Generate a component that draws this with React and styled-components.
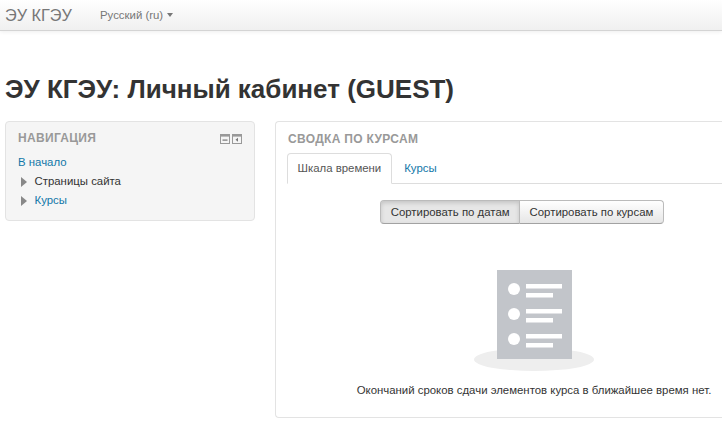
import React from "react";
import styled, { createGlobalStyle } from "styled-components";

const Global = createGlobalStyle`
  html, body { margin: 0; padding: 0; background: #fff; overflow: hidden; }
  body { font-family: "Liberation Sans", Arial, sans-serif; font-size: 11.4px; color: #333; width: 722px; height: 429px; }
`;
const Navbar = styled.header`
  height: 30px; display: flex; align-items: center; padding-left: 5px;
  background: linear-gradient(#ffffff, #f0f0f0); border-bottom: 1px solid #d4d4d4;
  box-shadow: 0 1px 4px rgba(0,0,0,.07);
`;
const Brand = styled.span`font-size: 16.3px; color: #777; width: 95px;`;
const Lang = styled.span`font-size: 11.4px; color: #777; display: flex; align-items: center; gap: 4px;`;
const Caret = styled.i`
  width: 0; height: 0; border-left: 3.5px solid transparent; border-right: 3.5px solid transparent;
  border-top: 4px solid #777;
`;
const Title = styled.h1`
  margin: 43px 0 0 5px; font-size: 26px; line-height: 30px; font-weight: 700; color: #333; height: 47px;
`;
const Columns = styled.div`display: flex; gap: 20px; padding-left: 5px; align-items: flex-start;`;
const Sidebar = styled.aside`
  flex: none; width: 250px; height: 100px; box-sizing: border-box; background: #f5f5f5;
  border: 1px solid #e3e3e3; border-radius: 4px; padding: 9px 12px 0; position: relative;
`;
const BlockTitle = styled.h2`
  margin: 0; font-size: 12px; line-height: 15px; font-weight: 700; color: #999; text-transform: uppercase; letter-spacing: .32px;
`;
const BlockActions = styled.div`position: absolute; top: 12px; right: 12px; display: flex; gap: 2px;`;
const NavList = styled.nav`margin-top: 7px; display: flex; flex-direction: column;`;
const NavRow = styled.div`
  height: 19px; line-height: 19px; display: flex; align-items: center;
  color: ${p => p.$link ? "#1177a8" : "#333"}; padding-left: ${p => p.$indent ? 3 : 0}px;
`;
const Arrow = styled.i`
  width: 0; height: 0; border-top: 5px solid transparent; border-bottom: 5px solid transparent;
  border-left: 6px solid #888; margin-right: 7.5px;
`;
const Main = styled.main`
  width: 447px; flex: none; height: 297px; box-sizing: border-box; background: #fff;
  border: 1px solid #e3e3e3; border-right: 0; border-radius: 4px 0 0 4px; padding: 10px 0 0 12px;
`;
const Tabs = styled.div`display: flex; margin: 6px 0 0 -1px; border-bottom: 1px solid #ddd; height: 30px;`;
const Tab = styled.div`
  box-sizing: border-box; height: ${p => p.$active ? 31 : 30}px; line-height: 29px; padding: 0 ${p => p.$active ? 9.5 : 11.5}px;
  color: ${p => p.$active ? "#555" : "#1177a8"};
  border: 1px solid ${p => p.$active ? "#ddd" : "transparent"}; border-bottom-color: ${p => p.$active ? "#fff" : "transparent"};
  border-radius: 4px 4px 0 0; background: ${p => p.$active ? "#fff" : "transparent"};
`;
const SortRow = styled.div`display: flex; justify-content: center; margin: 16px 0 0 34px;`;
const SortButton = styled.button`
  height: 24px; box-sizing: border-box; padding: 0 9.5px; font: 11.4px "Liberation Sans", Arial, sans-serif; color: #333;
  border: 1px solid #bbb; border-bottom-color: #a2a2a2;
  background: ${p => p.$active ? "#e6e6e6" : "linear-gradient(#fff, #e6e6e6)"};
  box-shadow: ${p => p.$active ? "inset 0 2px 4px rgba(0,0,0,.15)" : "inset 0 1px 0 rgba(255,255,255,.2)"};
  border-radius: ${p => p.$active ? "4px 0 0 4px" : "0 4px 4px 0"};
  margin-left: ${p => p.$active ? 0 : -1}px;
`;
const Empty = styled.div`display: flex; flex-direction: column; align-items: center; margin: 46px 0 0 58px;`;
const EmptyText = styled.p`margin: 11px 0 0; color: #333; line-height: 17px;`;

const BoxIcon = ({ minus }) => (
  <svg width="10" height="10" viewBox="0 0 10 10">
    <rect x=".5" y=".5" width="9" height="9" fill="#f5f5f5" stroke="#999" />
    <rect x="1" y="1" width="8" height="1.6" fill="#999" />
    {minus ? <rect x="2.5" y="5.5" width="5" height="1.2" fill="#777" /> : <path d="M6 3.8v4L3.5 5.8z" fill="#777" />}
  </svg>
);
const Illustration = () => (
  <svg width="120" height="101" viewBox="0 0 120 101">
    <ellipse cx="60" cy="89.5" rx="60" ry="11.5" fill="#eeeeee" />
    <rect x="23" y="0" width="75" height="89" fill="#c2c5ca" />
    {[0, 25, 50].map(d => (
      <g key={d} fill="#fff">
        <circle cx="40" cy={19 + d} r="6" />
        <rect x="52" y={14 + d} width="36" height="4.5" />
        <rect x="52" y={23 + d} width="27" height="4.5" />
      </g>
    ))}
  </svg>
);

export default function App() {
  return (
    <>
      <Global />
      <Navbar>
        <Brand>ЭУ КГЭУ</Brand>
        <Lang>Русский (ru) <Caret /></Lang>
      </Navbar>
      <Title>ЭУ КГЭУ: Личный кабинет (GUEST)</Title>
      <Columns>
        <Sidebar>
          <BlockTitle>Навигация</BlockTitle>
          <BlockActions><BoxIcon minus /><BoxIcon /></BlockActions>
          <NavList>
            <NavRow $link>В начало</NavRow>
            <NavRow $indent><Arrow />Страницы сайта</NavRow>
            <NavRow $link $indent><Arrow />Курсы</NavRow>
          </NavList>
        </Sidebar>
        <Main>
          <BlockTitle>Сводка по курсам</BlockTitle>
          <Tabs>
            <Tab $active>Шкала времени</Tab>
            <Tab>Курсы</Tab>
          </Tabs>
          <SortRow>
            <SortButton $active>Сортировать по датам</SortButton>
            <SortButton>Сортировать по курсам</SortButton>
          </SortRow>
          <Empty>
            <Illustration />
            <EmptyText>Окончаний сроков сдачи элементов курса в ближайшее время нет.</EmptyText>
          </Empty>
        </Main>
      </Columns>
    </>
  );
}
